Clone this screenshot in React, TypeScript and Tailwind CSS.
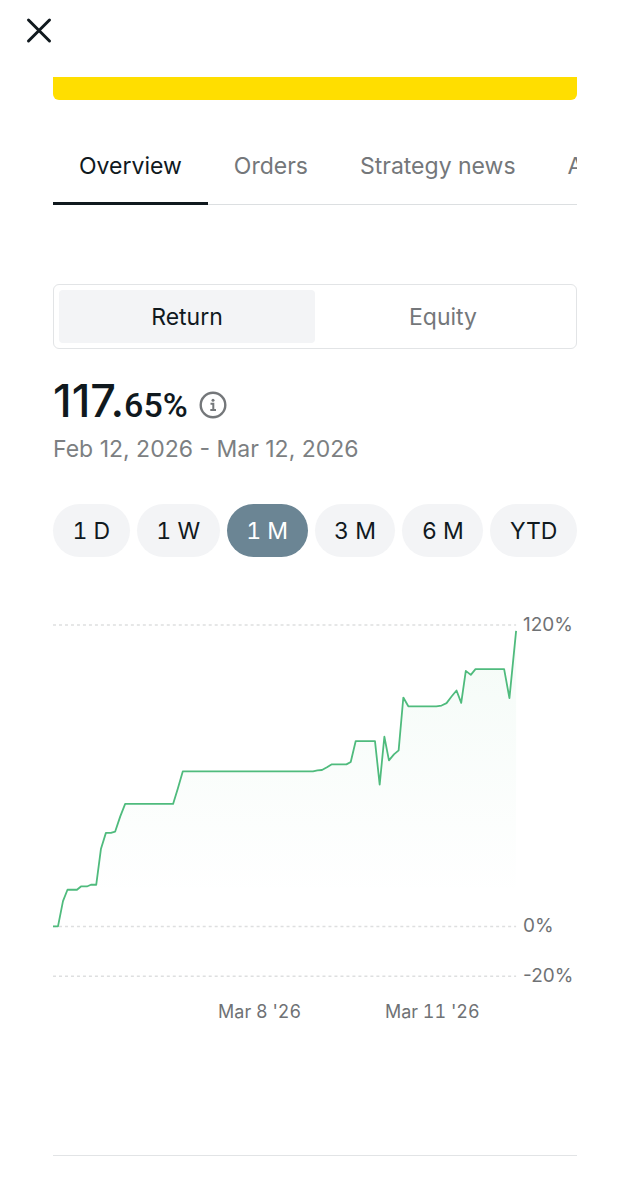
import React, { useState } from 'react';

const tabs = ['Overview', 'Orders', 'Strategy news', 'About'];
const modes = ['Return', 'Equity'];
const ranges = ['1 D', '1 W', '1 M', '3 M', '6 M', 'YTD'];

const gridLines = [
  { y: 15, label: '120%' },
  { y: 317, label: '0%' },
  { y: 367, label: '-20%' },
];

const points = [
  [0, 317], [5, 317], [10, 291.7], [14.5, 280.3], [24, 280.3], [28, 277], [34, 277], [38, 275.3], [43.3, 275.3],
  [48, 239.5], [53, 223.3], [58, 223.3], [62.3, 222], [67.3, 207], [72.3, 194.3], [120.3, 194.3], [125, 179],
  [130, 161.7], [260.5, 161.7], [265, 160.7], [269.5, 160.3], [274.5, 157.5], [279, 154.7], [294, 154.7],
  [298.3, 152.3], [303.3, 131.3], [322.6, 131.3], [327.3, 175], [332, 127], [336.6, 150.7], [341.6, 144.7],
  [346.3, 140.7], [351, 87.7], [356, 96.5], [384, 96.5], [389.3, 95.7], [394.3, 93.3], [399.3, 86.7],
  [404.3, 80.7], [409, 93], [413.6, 61], [418.6, 65], [423.3, 59.3], [452, 59.3], [457.3, 88.3], [464, 21],
];

const line = points.map(([x, y]) => `${x},${y}`).join(' ');

const ReturnChart: React.FC = () => (
  <svg viewBox="0 0 525 420" className="mt-[53px] block w-full" role="img" aria-label="Return over time">
    <defs>
      <linearGradient id="area" x1="0" y1="21" x2="0" y2="317" gradientUnits="userSpaceOnUse">
        <stop offset="0" stopColor="#4cbb7c" stopOpacity="0.06" />
        <stop offset="0.9" stopColor="#4cbb7c" stopOpacity="0" />
      </linearGradient>
    </defs>
    {gridLines.map(({ y, label }) => (
      <g key={label}>
        <line x1="0" x2="464" y1={y} y2={y} stroke="#dedfe0" strokeWidth="1.5" strokeDasharray="3 3" />
        <text x="471" y={y + 6} fontSize="19" fill="#6f7275">{label}</text>
      </g>
    ))}
    <polygon points={`${line} 464,317 0,317`} fill="url(#area)" />
    <polyline points={line} fill="none" stroke="#4fbb7d" strokeWidth="1.8" strokeLinejoin="round" />
    <g fontSize="18" fill="#6f7275" textAnchor="middle" className="tabular-nums">
      <text x="207" y="409">Mar 8 '26</text>
      <text x="380" y="409">Mar 11 '26</text>
    </g>
  </svg>
);

const App: React.FC = () => {
  const [tab, setTab] = useState('Overview');
  const [mode, setMode] = useState('Return');
  const [range, setRange] = useState('1 M');

  return (
    <div className="min-h-screen bg-white font-['Inter',sans-serif] text-[#10191e]">
      <header className="flex h-[77px] items-start px-[23px] pt-[14px]">
        <button type="button" aria-label="Close" className="h-8 w-8">
          <svg viewBox="0 0 32 32" fill="none" stroke="currentColor" strokeWidth="3" strokeLinecap="round">
            <path d="M5.5 6 26.5 27M26.5 6 5.5 27" />
          </svg>
        </button>
      </header>

      <main className="px-[53px]">
        <div className="h-[23px] rounded-b-md bg-[#ffde00]" />

        <nav className="mt-[27px] flex overflow-hidden shadow-[inset_0_-1px_0_#dcdfe1]">
          {tabs.map((name) => (
            <button
              key={name}
              type="button"
              onClick={() => setTab(name)}
              className={`h-[78px] shrink-0 border-b-3 px-[26px] pt-[2px] text-[23px] leading-8 ${
                tab === name ? 'border-[#10191e]' : 'border-transparent text-[#74777a]'
              }`}
            >
              {name}
            </button>
          ))}
        </nav>

        <div className="mt-[79px] grid h-[65px] grid-cols-2 rounded-md border border-[#e2e4e6] p-[5px]">
          {modes.map((name) => (
            <button
              key={name}
              type="button"
              onClick={() => setMode(name)}
              className={`rounded-sm pt-[2px] text-[23px] ${mode === name ? 'bg-[#f3f4f6]' : 'text-[#74777a]'}`}
            >
              {name}
            </button>
          ))}
        </div>

        <div className="mt-[24px] flex items-center gap-[11px]">
          <p className="font-['Roboto',sans-serif] text-[34px] leading-[56px] font-medium">
            <span className="font-['Inter',sans-serif] text-[45px]">117.</span>65%
          </p>
          <button type="button" aria-label="About this return" className="mt-1 text-[#74777a]">
            <svg width="28" height="28" viewBox="0 0 28 28" fill="none" stroke="currentColor" strokeWidth="2.4">
              <circle cx="14" cy="14" r="12.3" />
              <path d="M11.5 12.8H14.3V19M11.3 19H17" strokeWidth="2" />
              <circle cx="14" cy="9.3" r="1.5" fill="currentColor" stroke="none" />
            </svg>
          </button>
        </div>
        <p className="text-[23px] leading-8 text-[#7c7f82]">Feb 12, 2026 - Mar 12, 2026</p>

        <div className="mt-[39px] flex gap-[7px] tabular-nums">
          {ranges.map((name) => (
            <button
              key={name}
              type="button"
              onClick={() => setRange(name)}
              className={`h-[53px] flex-auto rounded-full pt-px text-[23px] ${
                range === name ? 'bg-[#6b8594] text-white' : 'bg-[#f3f4f6]'
              }`}
            >
              {name}
            </button>
          ))}
        </div>

        <ReturnChart />
        <hr className="mt-[126px] border-[#e2e4e6]" />
      </main>
    </div>
  );
};

export default App;
